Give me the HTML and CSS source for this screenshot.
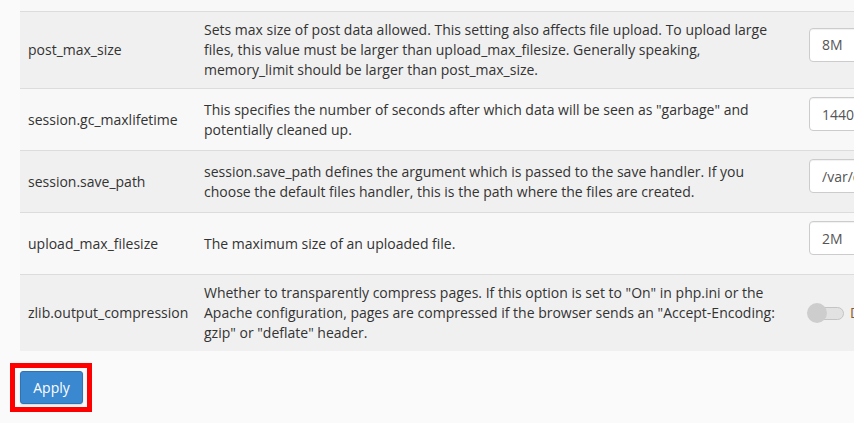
FILE: index.html
```html
<!DOCTYPE html>
<html lang="en">
<head>
<meta charset="utf-8">
<title>PHP INI Editor</title>
<link rel="stylesheet" href="styles.css">
</head>
<body>
<div class="page">
  <div class="table-wrap">
    <table class="ini-table">
      <colgroup>
        <col class="col-name">
        <col class="col-desc">
        <col class="col-value">
      </colgroup>
      <tbody>
        <tr class="row-light row-partial"><td></td><td></td><td></td></tr>
        <tr class="row-dark">
          <td class="name">post_max_size</td>
          <td class="desc">Sets max size of post data allowed. This setting also affects file upload. To upload large files, this value must be larger than upload_max_filesize. Generally speaking, memory_limit should be larger than post_max_size.</td>
          <td class="value"><div class="field"><input class="text-input" type="text" value="8M"></div></td>
        </tr>
        <tr class="row-light">
          <td class="name">session.gc_maxlifetime</td>
          <td class="desc">This specifies the number of seconds after which data will be seen as "garbage" and potentially cleaned up.</td>
          <td class="value"><div class="field"><input class="text-input" type="text" value="1440"></div></td>
        </tr>
        <tr class="row-dark">
          <td class="name">session.save_path</td>
          <td class="desc">session.save_path defines the argument which is passed to the save handler. If you choose the default files handler, this is the path where the files are created.</td>
          <td class="value"><div class="field"><input class="text-input" type="text" value="/var/cpanel/php/sessions/ea-php74"></div></td>
        </tr>
        <tr class="row-light">
          <td class="name">upload_max_filesize</td>
          <td class="desc">The maximum size of an uploaded file.</td>
          <td class="value"><div class="field"><input class="text-input" type="text" value="2M"></div></td>
        </tr>
        <tr class="row-dark">
          <td class="name">zlib.output_compression</td>
          <td class="desc">Whether to transparently compress pages. If this option is set to "On" in php.ini or the Apache configuration, pages are compressed if the browser sends an "Accept-Encoding: gzip" or "deflate" header.</td>
          <td class="value">
            <div class="toggle">
              <span class="switch"><span class="knob"></span></span>
              <span class="toggle-label">Disabled</span>
            </div>
          </td>
        </tr>
      </tbody>
    </table>
  </div>
  <div class="actions">
    <span class="highlight"><button class="btn-primary" type="button">Apply</button></span>
  </div>
</div>
</body>
</html>
```
FILE: styles.css
```css
html, body {
  margin: 0;
  padding: 0;
  background: #fafafa;
  overflow: hidden;
}

body {
  font-family: "Open Sans", "Liberation Sans", sans-serif;
  font-size: 14px;
  line-height: 20px;
  color: #333;
}

.page {
  width: 854px;
  height: 423px;
  overflow: hidden;
}

.table-wrap {
  padding-left: 20px;
}

.ini-table {
  border-collapse: collapse;
  table-layout: fixed;
  width: 1000px;
}

.col-name { width: 176px; }
.col-desc { width: 605px; }
.col-value { width: 219px; }

.ini-table td {
  padding: 8px;
  border-top: 1px solid #dcdcdc;
  vertical-align: middle;
}

.row-partial td {
  height: 11px;
  padding: 0;
  border-top: none;
}

.row-dark td { background: #f0f0f0; }
.row-light td { background: #f8f8f8; }

.name {
  white-space: nowrap;
}

.field {
  padding-bottom: 11px;
}

.text-input {
  display: block;
  box-sizing: border-box;
  width: 200px;
  height: 34px;
  padding: 6px 12px;
  font-family: "Open Sans", "Liberation Sans", sans-serif;
  font-size: 14px;
  line-height: 20px;
  color: #555;
  background: #fff;
  border: 1px solid #ccc;
  border-radius: 4px;
  box-shadow: inset 0 1px 1px rgba(0, 0, 0, 0.06);
}

.toggle {
  display: flex;
  align-items: center;
  gap: 6px;
  margin-left: -2px;
}

.switch {
  position: relative;
  display: block;
  width: 37px;
  height: 20px;
}

.switch::before {
  content: "";
  position: absolute;
  left: 8px;
  right: 0;
  top: 4px;
  height: 11px;
  background: #e2e2e2;
  border: 1px solid #c4c4c4;
  border-radius: 7px;
}

.knob {
  position: absolute;
  left: 0;
  top: 0;
  width: 20px;
  height: 20px;
  border-radius: 50%;
  background: #cdcdcd;
}

.toggle-label {
  color: #8a5a2b;
  font-size: 14px;
}

.actions {
  padding: 12px 0 0 10px;
}

.highlight {
  display: inline-block;
  border: 5px solid #ff0000;
  padding: 3px 4px 3px 5px;
  background: #fafafa;
}

.btn-primary {
  display: block;
  box-sizing: border-box;
  width: 63px;
  height: 33px;
  padding: 6px 12px;
  font-family: "Open Sans", "Liberation Sans", sans-serif;
  font-size: 14px;
  line-height: 19px;
  color: #fff;
  background: #3a88cf;
  border: 1px solid #2f73b3;
  border-radius: 3px;
  box-shadow: 0 1px 2px rgba(0, 0, 0, 0.15);
  cursor: pointer;
}
```
